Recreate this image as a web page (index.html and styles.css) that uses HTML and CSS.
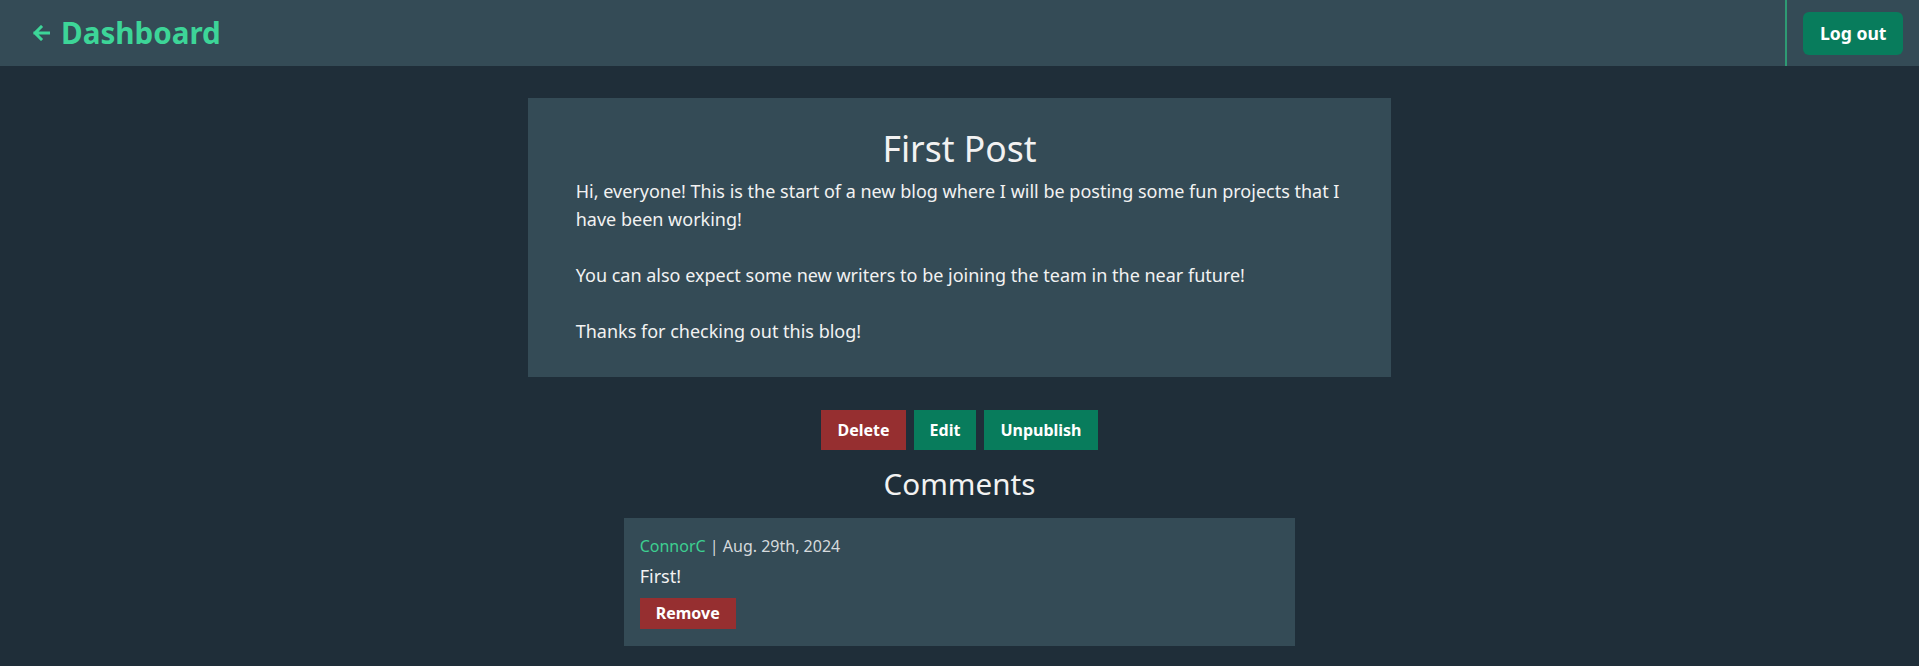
FILE: index.html
```html
<!DOCTYPE html>
<html lang="en">
<head>
<meta charset="utf-8">
<title>Dashboard - First Post</title>
<link rel="stylesheet" href="styles.css">
</head>
<body>
<header class="topbar">
  <a class="back" href="#">
    <svg class="back-icon" width="18" height="16" viewBox="0 0 18 16" aria-hidden="true">
      <path d="M9 2 L3 8 L9 14 M3 8 H17" fill="none" stroke="currentColor" stroke-width="3" stroke-linecap="square" stroke-linejoin="miter"/>
    </svg>
    <span>Dashboard</span>
  </a>
  <div class="top-actions">
    <button class="btn btn-green btn-round">Log out</button>
  </div>
</header>
<main class="main">
  <article class="post">
    <h1 class="post-title">First Post</h1>
    <p class="post-body">Hi, everyone! This is the start of a new blog where I will be posting some fun projects that I have been working!

You can also expect some new writers to be joining the team in the near future!

Thanks for checking out this blog!</p>
  </article>
  <div class="post-actions">
    <button class="btn btn-red">Delete</button>
    <button class="btn btn-green">Edit</button>
    <button class="btn btn-green">Unpublish</button>
  </div>
  <h2 class="comments-title">Comments</h2>
  <section class="comment">
    <div class="comment-meta"><span class="comment-author">ConnorC</span> | Aug. 29th, 2024</div>
    <div class="comment-text">First!</div>
    <button class="btn btn-red btn-small">Remove</button>
  </section>
</main>
</body>
</html>
```

FILE: styles.css
```css
* { box-sizing: border-box; }
html, body { margin: 0; padding: 0; }
body {
  background: #1f2e39;
  color: #f2f2f2;
  font-family: "Noto Sans", "Open Sans", sans-serif;
  min-height: 666px;
}
.topbar {
  height: 66px;
  background: #344b56;
  display: flex;
  align-items: stretch;
  justify-content: space-between;
}
.back {
  display: flex;
  align-items: center;
  gap: 11px;
  padding-left: 32px;
  padding-bottom: 2px;
  color: #3dd598;
  text-decoration: none;
  font-weight: 700;
  font-size: 29.6px;
}
.back-icon { display: block; margin-top: 2px; }
.top-actions {
  border-left: 2px solid #2e9a73;
  padding: 0 16px;
  display: flex;
  align-items: center;
}
.btn {
  font-family: "Noto Sans", "Open Sans", sans-serif;
  font-weight: 700;
  font-size: 16px;
  line-height: 24px;
  color: #ffffff;
  border: none;
  padding: 8px 16px;
  cursor: pointer;
}
.btn-green { background: #087c5c; }
.btn-red { background: #962f30; }
.btn-round {
  border-radius: 6px;
  font-size: 17.6px;
  line-height: 27px;
  padding: 8px 16.5px;
}
.btn-small {
  padding: 4px 16px;
  line-height: 23px;
}
.main {
  display: flex;
  flex-direction: column;
  align-items: center;
  padding-top: 32px;
}
.post {
  width: 45%;
  background: #344b56;
  padding: 25px 48px 32px;
}
.post-title {
  margin: 0 0 3px;
  text-align: center;
  font-weight: 400;
  font-size: 35.5px;
  line-height: 51px;
}
.post-body {
  margin: 0;
  white-space: pre-line;
  font-size: 18px;
  line-height: 28px;
}
.post-actions {
  display: flex;
  gap: 8px;
  margin-top: 33px;
}
.comments-title {
  margin: 14px 0 14px;
  font-weight: 400;
  font-size: 29.6px;
  line-height: 40px;
}
.comment {
  width: 35%;
  background: #344b56;
  padding: 16px 16px 17px;
  display: flex;
  flex-direction: column;
  align-items: flex-start;
}
.comment-meta {
  font-size: 16px;
  line-height: 24px;
  color: #d6dadd;
}
.comment-author { color: #3dcf91; }
.comment-text {
  font-size: 18px;
  line-height: 28px;
  margin: 4px 0 8px;
}
```
